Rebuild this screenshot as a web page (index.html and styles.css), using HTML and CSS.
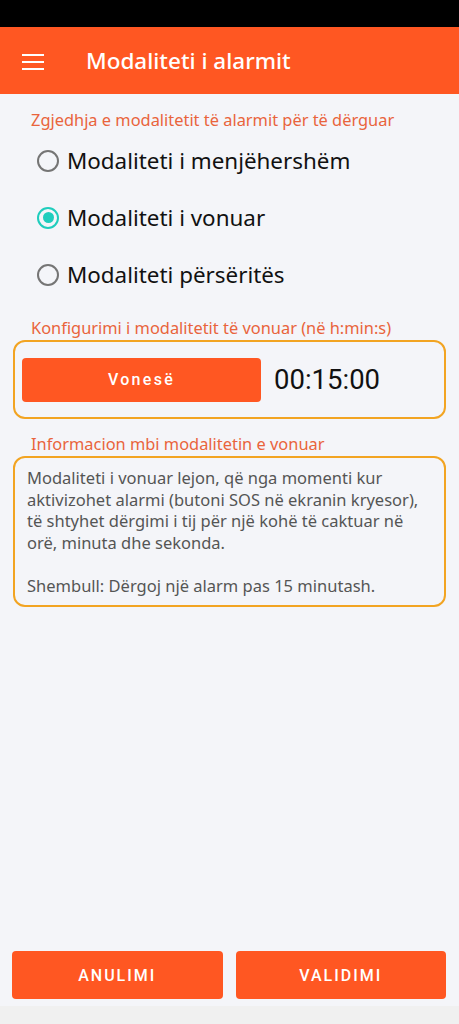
FILE: index.html
```html
<!DOCTYPE html>
<html lang="sq">
<head>
<meta charset="utf-8">
<link rel="stylesheet" href="styles.css">
</head>
<body>
<div class="screen">
  <div class="statusbar"></div>
  <header class="appbar">
    <svg class="menu" width="22" height="16" viewBox="0 0 22 16"><rect x="0" y="0" width="22" height="2" fill="#fff"/><rect x="0" y="7" width="22" height="2" fill="#fff"/><rect x="0" y="14" width="22" height="2" fill="#fff"/></svg>
    <h1 class="title">Modaliteti i alarmit</h1>
  </header>
  <main class="content">
    <div class="label first">Zgjedhja e modalitetit të alarmit për të dërguar</div>
    <div class="radios">
      <div class="radio"><span class="circle"></span><span class="rtext">Modaliteti i menjëhershëm</span></div>
      <div class="radio"><span class="circle on"></span><span class="rtext">Modaliteti i vonuar</span></div>
      <div class="radio"><span class="circle"></span><span class="rtext">Modaliteti përsëritës</span></div>
    </div>
    <div class="label">Konfigurimi i modalitetit të vonuar (në h:min:s)</div>
    <div class="box config">
      <div class="btn delay">Vonesë</div>
      <div class="time">00:15:00</div>
    </div>
    <div class="label">Informacion mbi modalitetin e vonuar</div>
    <div class="box info">
      <p>Modaliteti i vonuar lejon, që nga momenti kur aktivizohet alarmi (butoni SOS në ekranin kryesor), të shtyhet dërgimi i tij për një kohë të caktuar në orë, minuta dhe sekonda.</p>
      <p>Shembull: Dërgoj një alarm pas 15 minutash.</p>
    </div>
  </main>
  <footer class="actions">
    <div class="btn big">ANULIMI</div>
    <div class="btn big">VALIDIMI</div>
  </footer>
  <div class="navbar"></div>
</div>
</body>
</html>
```
FILE: styles.css
```css
* { box-sizing: border-box; }
html, body { margin: 0; padding: 0; }
body { font-family: "Noto Sans", Roboto, sans-serif; background: #f4f5f9; }
.screen { width: 459px; height: 1024px; display: flex; flex-direction: column; background: #f4f5f9; }
.statusbar { height: 27px; background: #000; flex: none; }
.appbar { height: 67px; background: #ff5722; display: flex; align-items: center; padding-left: 22px; flex: none; }
.menu { display: block; margin-top: 2px; }
.title { margin: 0 0 0 42px; color: #fff; font-size: 22.5px; font-weight: 500; line-height: 28px; }
.content { flex: 1; padding: 0 13px; display: flex; flex-direction: column; }
.label { color: #e9643c; font-size: 16.4px; padding-left: 18px; line-height: 20px; }
.label.first { margin-top: 16px; }
.radios { display: flex; flex-direction: column; margin-top: 2px; margin-bottom: 15px; }
.radio { height: 57px; display: flex; align-items: center; padding-left: 24px; }
.circle { width: 22px; height: 22px; border: 2px solid #757575; border-radius: 50%; flex: none; display: flex; align-items: center; justify-content: center; }
.circle.on { border-color: #1fcdbd; }
.circle.on::after { content: ""; width: 11px; height: 11px; border-radius: 50%; background: #1fcdbd; }
.rtext { margin-left: 8px; font-size: 22.4px; color: #111; line-height: 28px; }
.box { border: 2px solid #f2a422; border-radius: 12px; margin-top: 2px; }
.config { height: 79px; display: flex; align-items: center; padding-left: 7px; margin-bottom: 15px; }
.btn { background: #ff5722; color: #fff; display: flex; align-items: center; justify-content: center; border-radius: 4px; font-weight: 500; font-family: Roboto, sans-serif; }
.delay { width: 239px; height: 44px; font-size: 16px; letter-spacing: 2.3px; }
.time { margin-left: 13px; font-size: 27.5px; color: #111; font-family: Roboto, sans-serif; }
.info { height: 151px; padding: 9px 12px 0 12px; color: #555; font-size: 16.5px; line-height: 21.5px; }
.info p { margin: 0; }
.info p + p { margin-top: 21.5px; }
.actions { display: flex; gap: 13px; padding: 0 13px 7px 12px; flex: none; }
.big { flex: 1; height: 48px; font-size: 16px; letter-spacing: 2px; }
.navbar { height: 18px; background: #f0f0f0; flex: none; }
```
